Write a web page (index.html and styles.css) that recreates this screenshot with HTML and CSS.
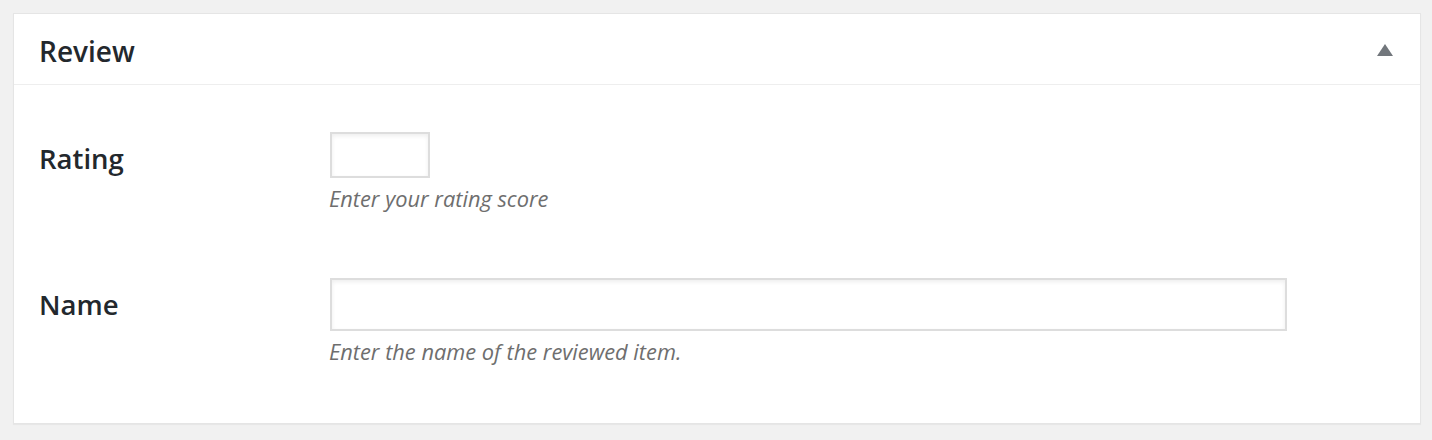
FILE: index.html
```html
<!DOCTYPE html>
<html>
<head>
<meta charset="utf-8">
<link rel="stylesheet" href="styles.css">
</head>
<body>
<div class="postbox">
  <div class="hndle">
    <h2 class="title">Review</h2>
    <span class="toggle"></span>
  </div>
  <div class="inside">
    <div class="row">
      <label class="label">Rating</label>
      <div class="field">
        <input class="input input-small" type="text">
        <p class="desc">Enter your rating score</p>
      </div>
    </div>
    <div class="row row-name">
      <label class="label">Name</label>
      <div class="field">
        <input class="input input-wide" type="text">
        <p class="desc">Enter the name of the reviewed item.</p>
      </div>
    </div>
  </div>
</div>
</body>
</html>
```
FILE: styles.css
```css
html, body {
  margin: 0;
  background: #f1f1f1;
  font-family: "Open Sans", "Noto Sans", sans-serif;
  color: #23282d;
}
body {
  padding: 13px 11px 0 13px;
  height: 440px;
  box-sizing: border-box;
}
.postbox {
  background: #fff;
  border: 1px solid #e5e5e5;
  box-shadow: 0 1px 1px rgba(0,0,0,0.04);
}
.hndle {
  display: flex;
  align-items: flex-start;
  justify-content: space-between;
  height: 71px;
  box-sizing: border-box;
  border-bottom: 1px solid #eee;
  padding: 0 27px 0 25px;
}
.title {
  margin: 0;
  padding-top: 18px;
  font-size: 28px;
  line-height: 38px;
  font-weight: 600;
}
.toggle {
  margin-top: 30px;
  width: 0;
  height: 0;
  border-left: 8px solid transparent;
  border-right: 8px solid transparent;
  border-bottom: 12px solid #72777c;
}
.inside {
  padding: 47px 25px 56px 25px;
}
.row {
  display: grid;
  grid-template-columns: 291px 1fr;
}
.row-name {
  margin-top: 64px;
}
.label {
  padding-top: 9px;
  font-size: 27.5px;
  line-height: 36px;
  font-weight: 600;
}
.field {
  display: flex;
  flex-direction: column;
  align-items: flex-start;
}
.input {
  box-sizing: border-box;
  margin: 0;
  border: 2px solid #ddd;
  background: #fff;
  box-shadow: inset 0 2px 4px rgba(0,0,0,0.07);
  outline: none;
}
.input-small {
  width: 100px;
  height: 46px;
}
.input-wide {
  width: 957px;
  height: 53px;
}
.desc {
  margin: 6px 0 0 -1px;
  font-size: 21.8px;
  line-height: 30px;
  font-style: italic;
  color: #6e6e6e;
}
```
